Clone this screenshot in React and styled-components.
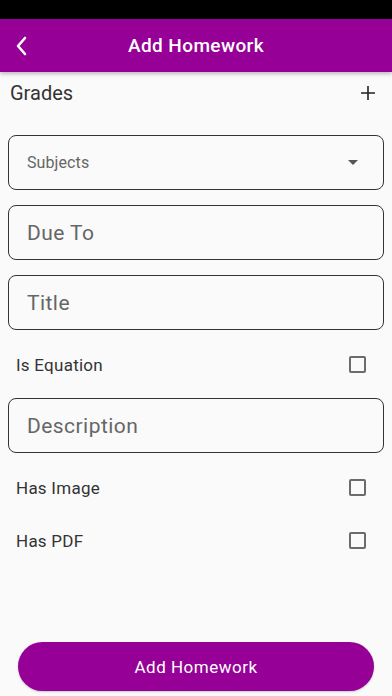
import React, { useState } from 'react';
import styled, { createGlobalStyle } from 'styled-components';

const GlobalStyle = createGlobalStyle`
  * { box-sizing: border-box; }
  body {
    margin: 0;
    background: #fafafa;
    font-family: Roboto, "Liberation Sans", sans-serif;
  }
`;

const Page = styled.div`
  min-height: 696px;
  display: flex;
  flex-direction: column;
  background: #fafafa;
`;

const StatusBar = styled.div`
  height: 19px;
  background: #000;
`;

const AppBar = styled.header`
  height: 53px;
  background: #960096;
  display: flex;
  align-items: center;
  justify-content: center;
  position: relative;
  box-shadow: 0 2px 4px rgba(0, 0, 0, 0.25);
  z-index: 1;
`;

const BackButton = styled.button`
  position: absolute;
  left: 10px;
  top: 50%;
  transform: translateY(-50%);
  background: none;
  border: none;
  padding: 4px;
  display: flex;
`;

const AppTitle = styled.h1`
  margin: 0;
  color: #fff;
  font-size: 19px;
  font-weight: 500;
  letter-spacing: 0.4px;
`;

const Content = styled.div`
  flex: 1;
  display: flex;
  flex-direction: column;
  padding: 0 8px;
`;

const GradesRow = styled.div`
  height: 42px;
  display: flex;
  align-items: center;
  justify-content: space-between;
  padding: 0 8px 0 2px;
  margin-bottom: 21px;
`;

const GradesLabel = styled.span`
  font-size: 20px;
  color: #333;
`;

const IconButton = styled.button`
  background: none;
  border: none;
  padding: 0;
  display: flex;
`;

const Field = styled.div`
  height: 55px;
  border: 1px solid #333;
  border-radius: 8px;
  display: flex;
  align-items: center;
  justify-content: space-between;
  padding: 0 25px 0 18px;
  margin-bottom: ${(p) => p.$gap ?? 15}px;
`;

const Placeholder = styled.span`
  color: #666;
  font-size: ${(p) => (p.$small ? 16 : 21)}px;
  letter-spacing: ${(p) => (p.$small ? 0.1 : 0.45)}px;
`;

const CheckRow = styled.label`
  height: 53px;
  display: flex;
  align-items: center;
  justify-content: space-between;
  padding: 0 18px 0 8px;
  margin-top: ${(p) => p.$top ?? 0}px;
  margin-bottom: ${(p) => p.$bottom ?? 0}px;
  cursor: pointer;
`;

const CheckLabel = styled.span`
  font-size: 17px;
  color: #333;
  letter-spacing: 0.25px;
`;

const Box = styled.span`
  width: 17px;
  height: 17px;
  border: 2px solid #6b6b6b;
  border-radius: 2px;
  background: ${(p) => (p.$on ? '#960096' : 'transparent')};
  border-color: ${(p) => (p.$on ? '#960096' : '#6b6b6b')};
`;

const Footer = styled.div`
  padding: 0 18px 5px;
`;

const SubmitButton = styled.button`
  width: 100%;
  height: 49px;
  border: none;
  border-radius: 25px;
  background: #960096;
  color: #fff;
  font-family: inherit;
  font-size: 17px;
  letter-spacing: 0.5px;
  box-shadow: 0 1px 2px rgba(0, 0, 0, 0.2);
`;

const Check = ({ label, top, bottom }) => {
  const [on, setOn] = useState(false);
  return (
    <CheckRow $top={top} $bottom={bottom} onClick={() => setOn(!on)}>
      <CheckLabel>{label}</CheckLabel>
      <Box $on={on} />
    </CheckRow>
  );
};

const App = () => (
  <Page>
    <GlobalStyle />
    <StatusBar />
    <AppBar>
      <BackButton aria-label="Back">
        <svg width="16" height="20" viewBox="0 0 16 20">
          <path d="M11 2 L4 10 L11 18" fill="none" stroke="#fff" strokeWidth="2.6" strokeLinecap="round" strokeLinejoin="round" />
        </svg>
      </BackButton>
      <AppTitle>Add Homework</AppTitle>
    </AppBar>
    <Content>
      <GradesRow>
        <GradesLabel>Grades</GradesLabel>
        <IconButton aria-label="Add grade">
          <svg width="16" height="16" viewBox="0 0 16 16">
            <path d="M8 1 V15 M1 8 H15" stroke="#222" strokeWidth="1.6" />
          </svg>
        </IconButton>
      </GradesRow>
      <Field>
        <Placeholder $small>Subjects</Placeholder>
        <svg width="10" height="5" viewBox="0 0 10 5">
          <path d="M0 0 H10 L5 5 Z" fill="#555" />
        </svg>
      </Field>
      <Field>
        <Placeholder>Due To</Placeholder>
      </Field>
      <Field $gap={0}>
        <Placeholder>Title</Placeholder>
      </Field>
      <Check label="Is Equation" top={8} bottom={7} />
      <Field $gap={0}>
        <Placeholder>Description</Placeholder>
      </Field>
      <Check label="Has Image" top={8} />
      <Check label="Has PDF" />
    </Content>
    <Footer>
      <SubmitButton>Add Homework</SubmitButton>
    </Footer>
  </Page>
);

export default App;
